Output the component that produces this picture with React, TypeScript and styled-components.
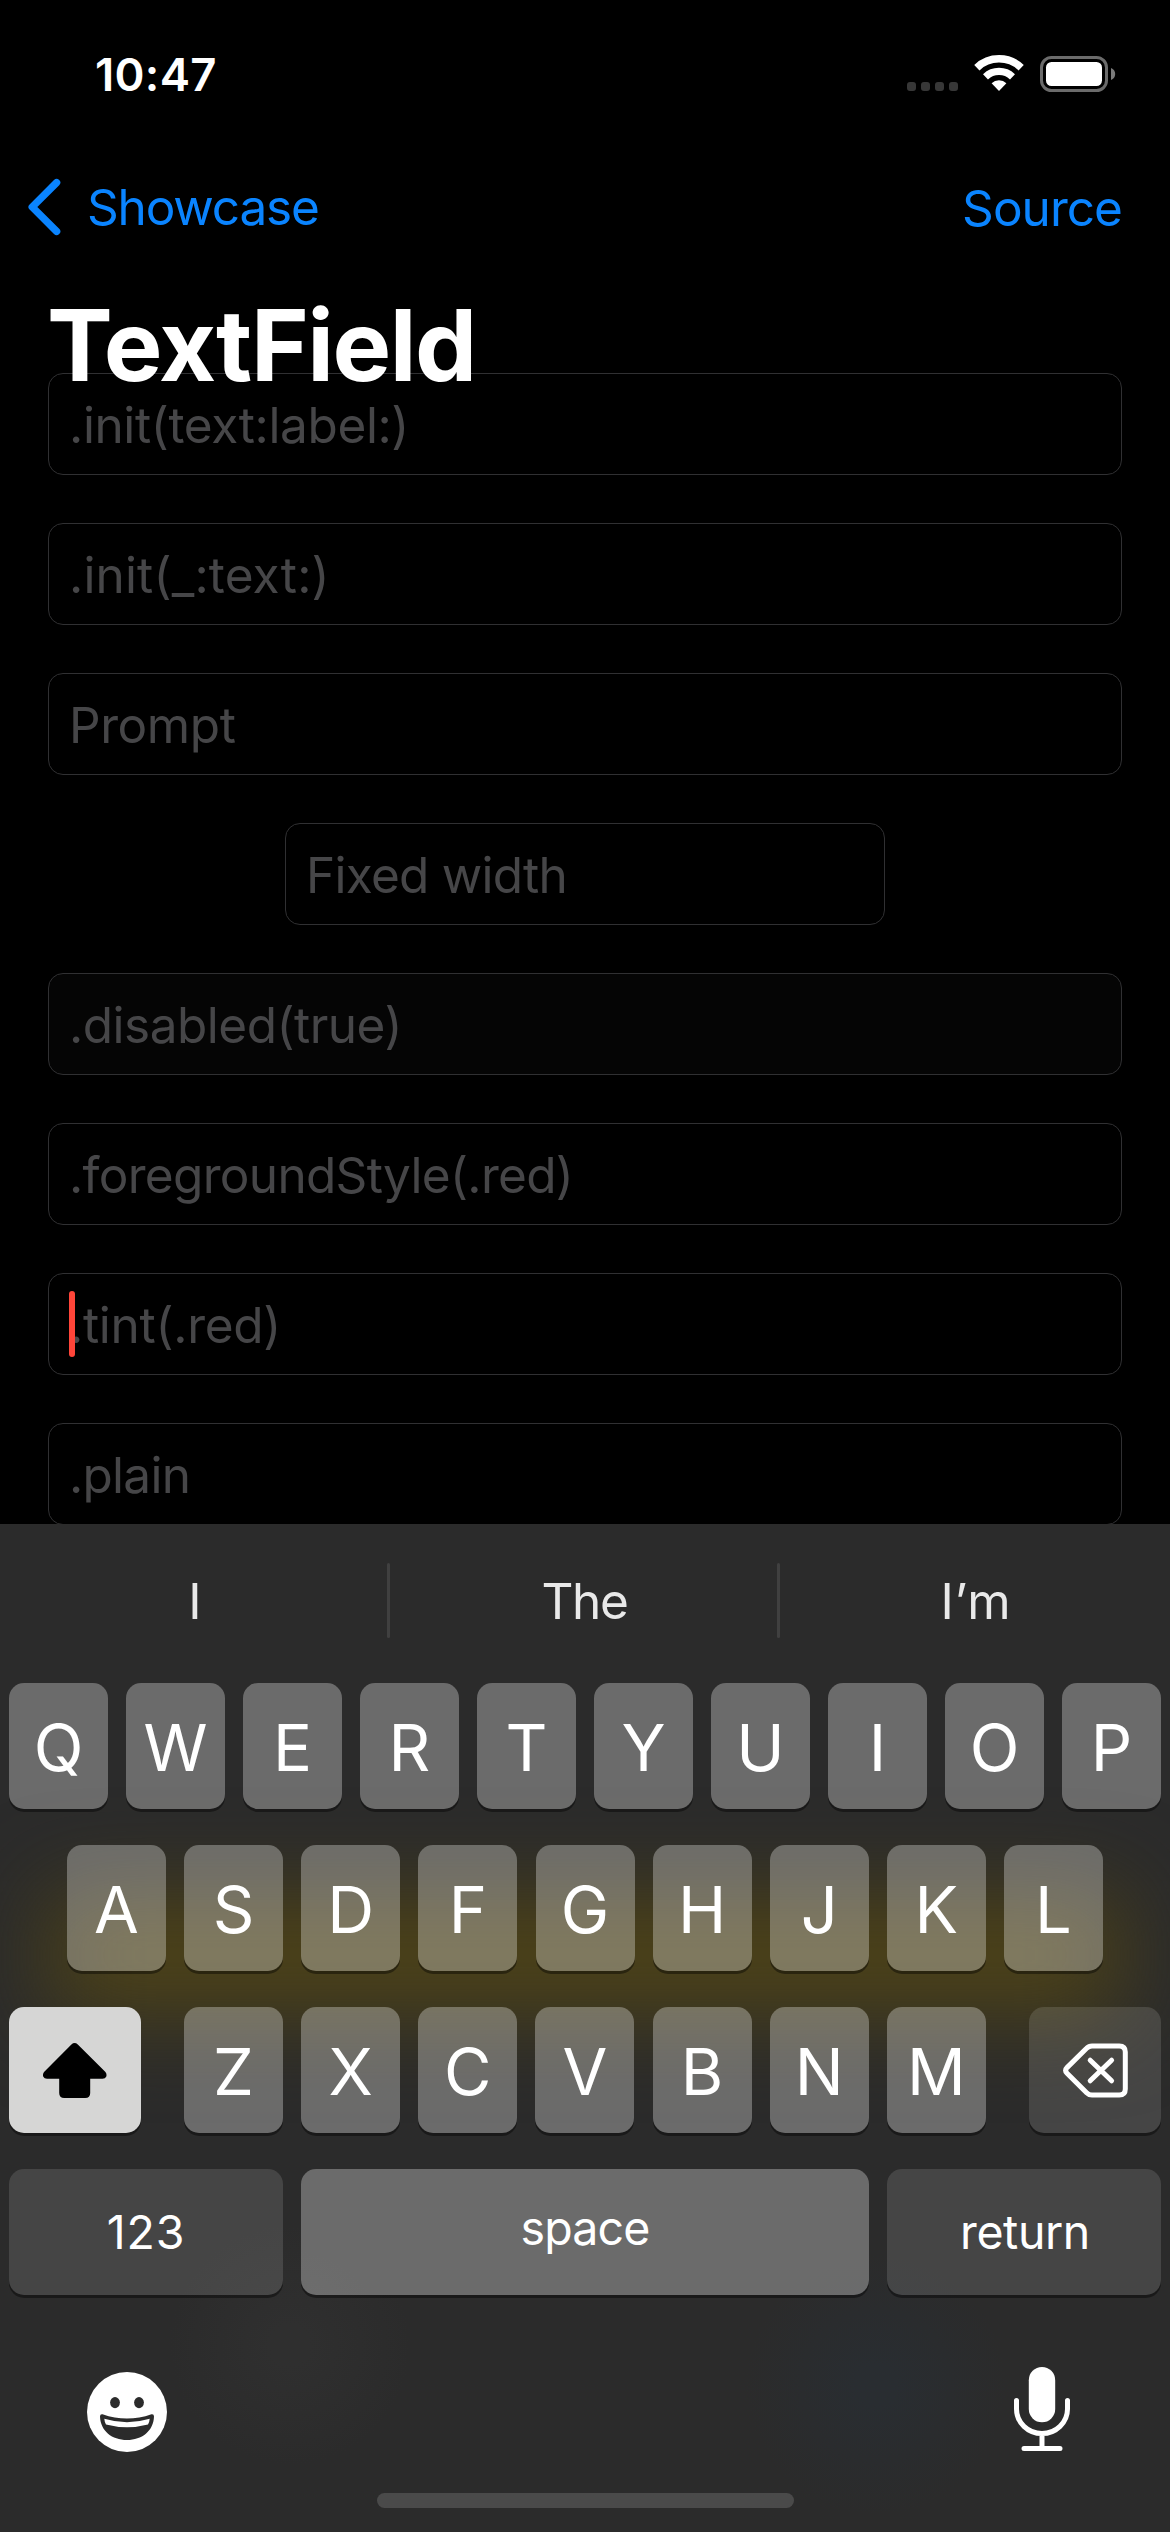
import React from 'react';
import styled, { createGlobalStyle } from 'styled-components';

const GlobalStyle = createGlobalStyle`
  * { box-sizing: border-box; }
  body {
    margin: 0;
    background: #000;
    font-family: Inter, "Liberation Sans", sans-serif;
  }
`;

const Screen = styled.div`
  display: flex;
  flex-direction: column;
  width: 1170px;
  height: 2532px;
  overflow: hidden;
  background: #000;
`;

const Page = styled.main`
  height: 1524px;
  overflow: hidden;
`;

const StatusBar = styled.header`
  display: flex;
  justify-content: space-between;
  align-items: flex-start;
  height: 141px;
  padding: 47px 54px 0 95px;
`;

const Clock = styled.span`
  color: #fff;
  font-size: 45.5px;
  font-weight: 600;
  line-height: 55px;
  letter-spacing: 0.3px;
`;

const StatusIcons = styled.div`
  display: flex;
  align-items: flex-start;
  gap: 16px;
  margin-top: 8px;

  svg { display: block; }
`;

const SignalDots = styled.div`
  display: flex;
  gap: 5px;
  margin-top: 27px;
`;

const Dot = styled.span`
  width: 9px;
  height: 9px;
  border-radius: 3px;
  background: #373737;
`;

const BatteryIcon = styled.svg`
  margin-top: 1px;
`;

const NavBar = styled.nav`
  display: flex;
  justify-content: space-between;
  align-items: center;
  height: 132px;
  padding: 0 48px 0 27px;
`;

const BackLink = styled.a`
  display: flex;
  align-items: center;
  gap: 26px;
`;

const NavText = styled.span<{ $tracking: number; $drop?: number }>`
  padding-top: ${(p) => p.$drop ?? 0}px;
  color: #0a84ff;
  font-size: 49.5px;
  line-height: 60px;
  letter-spacing: ${(p) => p.$tracking}px;
`;

const Title = styled.h1`
  position: relative;
  z-index: 1;
  margin: 12px 0 0 47px;
  color: #fff;
  font-size: 98.6px;
  font-weight: 700;
  line-height: 120px;
  letter-spacing: -1.48px;
`;

const FieldList = styled.div`
  display: flex;
  flex-direction: column;
  align-items: center;
  gap: 48px;
  margin-top: -32px;
  padding: 0 48px;
`;

const Field = styled.div<{ $width?: string; $disabled?: boolean; $tracking: number }>`
  position: relative;
  display: flex;
  flex: none;
  align-items: center;
  width: ${(p) => p.$width ?? '100%'};
  height: 102px;
  padding: 2px 20px 0;
  border: 1px solid #303032;
  border-radius: 15px;
  background: ${(p) => (p.$disabled ? '#050505' : 'transparent')};
  color: #464648;
  font-size: 49.5px;
  line-height: 60px;
  letter-spacing: ${(p) => p.$tracking}px;
`;

const Caret = styled.span`
  position: absolute;
  left: 20px;
  top: 17px;
  width: 6px;
  height: 66px;
  border-radius: 3px;
  background: #ff4539;
`;

const Keyboard = styled.section`
  position: relative;
  z-index: 0;
  display: flex;
  flex-direction: column;
  height: 1008px;
  overflow: hidden;
  background:
    radial-gradient(circle at 876px 861px, #292d31 0, #292d31 20px, rgba(41, 45, 49, 0) 130px),
    radial-gradient(circle at 290px 821px, #2f2f2f 0, #2f2f2f 20px, rgba(47, 47, 47, 0) 120px),
    #2b2b2b;

  &::before {
    content: '';
    position: absolute;
    z-index: -1;
    left: 48px;
    right: 48px;
    top: 371px;
    height: 120px;
    background: #4e4317;
    filter: blur(45px);
  }
`;

const SuggestionBar = styled.div`
  display: grid;
  grid-template-columns: 387px 3px 387px 3px 390px;
  justify-items: center;
  align-items: center;
  height: 153px;
  margin-bottom: 6px;
`;

const Suggestion = styled.span<{ $tracking?: number; $shift?: number }>`
  padding-left: ${(p) => p.$shift ?? 0}px;
  color: #e9e9e9;
  font-size: 49.5px;
  line-height: 60px;
  letter-spacing: ${(p) => p.$tracking ?? 0}px;
`;

const Divider = styled.span`
  width: 3px;
  height: 75px;
  border-radius: 2px;
  background: #404040;
`;

const Rows = styled.div`
  display: flex;
  flex-direction: column;
  gap: 36px;
  padding: 0 9px;
`;

const Row = styled.div<{ $inset?: number }>`
  display: flex;
  justify-content: space-between;
  padding: 0 ${(p) => p.$inset ?? 0}px;
`;

const LetterGroup = styled.div`
  display: flex;
  justify-content: space-between;
  width: 802px;
`;

const keyFill = {
  light: 'rgba(255, 255, 255, 0.3)',
  dark: 'rgba(255, 255, 255, 0.127)',
  active: '#d6d6d5',
};

const Key = styled.div<{ $fill: keyof typeof keyFill; $width: number }>`
  display: flex;
  justify-content: center;
  align-items: center;
  width: ${(p) => p.$width}px;
  height: 126px;
  border-radius: 15px;
  background: ${(p) => keyFill[p.$fill]};
  box-shadow: 0 3px 0 rgba(0, 0, 0, 0.4);
  color: #fff;
`;

const LetterKey = styled(Key)`
  padding-top: 3px;
  font-size: 65px;
  line-height: 79px;
`;

const WordKey = styled(Key)<{ $tracking: number; $lift?: number; $shift?: number }>`
  padding-bottom: ${(p) => p.$lift ?? 0}px;
  padding-left: ${(p) => p.$shift ?? 0}px;
  font-size: 46.5px;
  line-height: 56px;
  letter-spacing: ${(p) => p.$tracking}px;
`;

const BottomBar = styled.div`
  display: flex;
  justify-content: space-between;
  align-items: flex-start;
  height: 198px;
  padding: 72px 100px 0 87px;
`;

const EmojiIcon = styled.svg`
  margin-top: 5px;
`;

const HomeIndicator = styled.div`
  width: 417px;
  height: 15px;
  margin: 0 auto;
  border-radius: 8px;
  background: #4a4a4a;
`;

const fields = [
  { label: '.init(text:label:)', tracking: -0.38 },
  { label: '.init(_:text:)', tracking: 0.16 },
  { label: 'Prompt', tracking: -0.42 },
  { label: 'Fixed width', tracking: -0.74, width: '600px' },
  { label: '.disabled(true)', tracking: -0.5, disabled: true },
  { label: '.foregroundStyle(.red)', tracking: -0.69 },
  { label: '.tint(.red)', tracking: -0.29, focused: true },
  { label: '.plain', tracking: -0.74 },
];

const Letters = ({ keys }: { keys: string }) => (
  <>
    {keys.split('').map((k) => (
      <LetterKey key={k} $fill="light" $width={99}>{k}</LetterKey>
    ))}
  </>
);

const Chevron = () => (
  <svg width="34" height="58" viewBox="0 0 34 58" fill="none">
    <path d="M29.6 4.6 5.2 29 29.6 53.4" stroke="#0a84ff" strokeWidth="7.4" strokeLinecap="round" strokeLinejoin="round" />
  </svg>
);

const Wifi = () => (
  <svg width="50" height="37" viewBox="0 0 50 37" fill="none" stroke="#fff">
    <path d="M2.85 12.65A32.2 32.2 0 0 1 47.15 12.65" strokeWidth="7.6" />
    <path d="M11.5 21.8A19.6 19.6 0 0 1 38.5 21.8" strokeWidth="7.2" />
    <path d="M25 36 17.6 28.2A10.8 10.8 0 0 1 32.4 28.2Z" fill="#fff" stroke="none" />
  </svg>
);

const Battery = () => (
  <BatteryIcon width="76" height="36" viewBox="0 0 76 36">
    <rect x="1.5" y="1.5" width="65" height="33" rx="10" fill="none" stroke="#6b6b6b" strokeWidth="3" />
    <rect x="6" y="6" width="56" height="24" rx="5.5" fill="#fff" />
    <path d="M71 12C73.6 13 75.2 15.3 75.2 18S73.6 23 71 24Z" fill="#7a7a7a" />
  </BatteryIcon>
);

const Shift = () => (
  <svg width="64" height="55" viewBox="0 0 64 55">
    <path d="M28.4 1.5Q31.6-1.3 34.8 1.5L62.2 28.8Q64.2 31 63.2 33.7 62.2 35.7 59.5 35.7H47.2V50Q47.2 55 42.2 55H21.2Q16.2 55 16.2 50V35.7H4Q1.3 35.7.3 33.7-.7 31 1.3 28.8Z" fill="#000" />
  </svg>
);

const Backspace = () => (
  <svg width="65" height="55" viewBox="0 0 65 55" fill="none" stroke="#fff" strokeWidth="5" strokeLinecap="round">
    <path d="M29 2.9H56.3Q62.3 2.9 62.3 8.9V46Q62.3 52 56.3 52H29Q25.8 52 23.6 49.7L4 30.2Q1.3 27.4 4 24.6L23.6 5.2Q25.8 2.9 29 2.9Z" />
    <path d="M27.2 17.2 48.6 37.8M48.6 17.2 27.2 37.8" />
  </svg>
);

const Emoji = () => (
  <EmojiIcon width="80" height="80" viewBox="0 0 80 80">
    <circle cx="40" cy="40" r="40" fill="#fff" />
    <ellipse cx="28" cy="30.6" rx="4.9" ry="5.6" fill="#2b2b2b" />
    <ellipse cx="52" cy="30.6" rx="4.9" ry="5.6" fill="#2b2b2b" />
    <path d="M15.5 42.2Q40 51 64.5 42.2 67 41.8 67 44.5C66.5 59 55 68 40 68S13.5 59 13 44.5Q13 41.8 15.5 42.2Z" fill="#2b2b2b" />
    <path d="M17.3 46.8Q40 53.7 62.7 46.8 62.4 50.5 61 52.5 40 58 19 52.5 17.6 50.5 17.3 46.8Z" fill="#fff" />
  </EmojiIcon>
);

const Mic = () => (
  <svg width="56" height="85" viewBox="0 0 56 85" fill="none" stroke="#fff" strokeWidth="5" strokeLinecap="round">
    <rect x="14.8" y="0" width="26.4" height="55.3" rx="13.2" fill="#fff" stroke="none" />
    <path d="M2.5 33.5V42A25.5 24.5 0 0 0 53.5 42V33.5M28 66.5V81.6M10 81.6H46" />
  </svg>
);

export default function App() {
  return (
    <Screen>
      <GlobalStyle />
      <Page>
        <StatusBar>
          <Clock>10:47</Clock>
          <StatusIcons>
            <SignalDots><Dot /><Dot /><Dot /><Dot /></SignalDots>
            <Wifi />
            <Battery />
          </StatusIcons>
        </StatusBar>
        <NavBar>
          <BackLink>
            <Chevron />
            <NavText $tracking={-1.15}>Showcase</NavText>
          </BackLink>
          <NavText $tracking={-0.96} $drop={2}>Source</NavText>
        </NavBar>
        <Title>TextField</Title>
        <FieldList>
          {fields.map((f) => (
            <Field key={f.label} $width={f.width} $disabled={f.disabled} $tracking={f.tracking}>
              {f.label}
              {f.focused && <Caret />}
            </Field>
          ))}
        </FieldList>
      </Page>
      <Keyboard>
        <SuggestionBar>
          <Suggestion $shift={3}>I</Suggestion>
          <Divider />
          <Suggestion $tracking={-1.3} $shift={2}>The</Suggestion>
          <Divider />
          <Suggestion $tracking={0.8} $shift={2}>I’m</Suggestion>
        </SuggestionBar>
        <Rows>
          <Row><Letters keys="QWERTYUIOP" /></Row>
          <Row $inset={58}><Letters keys="ASDFGHJKL" /></Row>
          <Row>
            <Key $fill="active" $width={132}><Shift /></Key>
            <LetterGroup><Letters keys="ZXCVBNM" /></LetterGroup>
            <Key $fill="dark" $width={132}><Backspace /></Key>
          </Row>
          <Row>
            <WordKey $fill="dark" $width={274} $tracking={0.8}>123</WordKey>
            <WordKey $fill="light" $width={568} $tracking={-0.9} $lift={8}>space</WordKey>
            <WordKey $fill="dark" $width={274} $tracking={-0.4} $shift={2}>return</WordKey>
          </Row>
        </Rows>
        <BottomBar>
          <Emoji />
          <Mic />
        </BottomBar>
        <HomeIndicator />
      </Keyboard>
    </Screen>
  );
}
